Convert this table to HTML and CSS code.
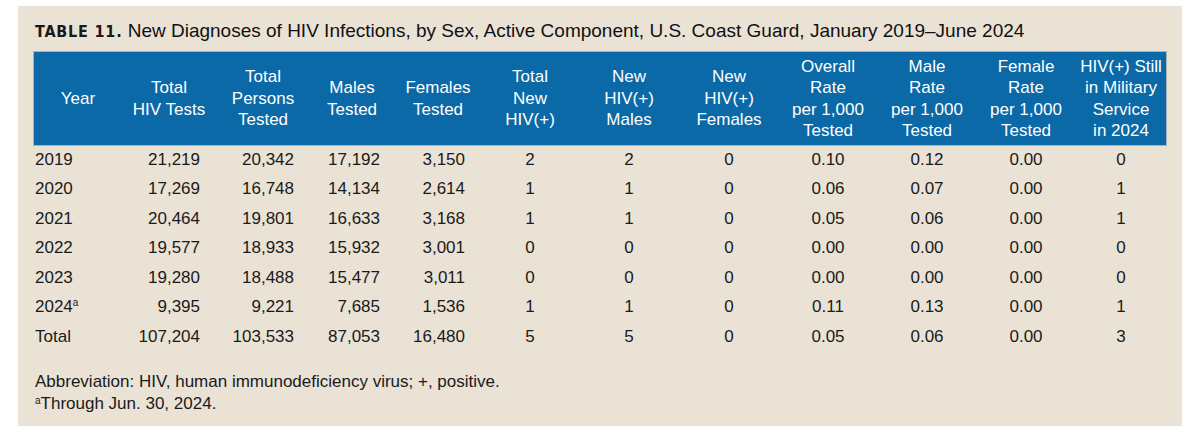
FILE: index.html
```html
<!DOCTYPE html>
<html>
<head>
<meta charset="utf-8">
<link rel="stylesheet" href="styles.css">
</head>
<body>
<div class="panel">
  <div class="title"><span class="label">TABLE 11.</span> New Diagnoses of HIV Infections, by Sex, Active Component, U.S. Coast Guard, January 2019–June 2024</div>
  <table class="data">
    <colgroup>
      <col class="c1"><col class="c2"><col class="c3"><col class="c4"><col class="c5"><col class="c6"><col class="c7"><col class="c8"><col class="c9"><col class="c10"><col class="c11"><col class="c12">
    </colgroup>
    <thead>
      <tr>
        <th>Year</th>
        <th>Total<br>HIV Tests</th>
        <th>Total<br>Persons<br>Tested</th>
        <th>Males<br>Tested</th>
        <th>Females<br>Tested</th>
        <th>Total<br>New<br>HIV(+)</th>
        <th>New<br>HIV(+)<br>Males</th>
        <th>New<br>HIV(+)<br>Females</th>
        <th>Overall<br>Rate<br>per 1,000<br>Tested</th>
        <th>Male<br>Rate<br>per 1,000<br>Tested</th>
        <th>Female<br>Rate<br>per 1,000<br>Tested</th>
        <th>HIV(+) Still<br>in Military<br>Service<br>in 2024</th>
      </tr>
    </thead>
    <tbody>
      <tr><td class="yr">2019</td><td class="n n2">21,219</td><td class="n n3">20,342</td><td class="n n4">17,192</td><td class="n n5">3,150</td><td>2</td><td>2</td><td>0</td><td>0.10</td><td>0.12</td><td>0.00</td><td>0</td></tr>
      <tr><td class="yr">2020</td><td class="n n2">17,269</td><td class="n n3">16,748</td><td class="n n4">14,134</td><td class="n n5">2,614</td><td>1</td><td>1</td><td>0</td><td>0.06</td><td>0.07</td><td>0.00</td><td>1</td></tr>
      <tr><td class="yr">2021</td><td class="n n2">20,464</td><td class="n n3">19,801</td><td class="n n4">16,633</td><td class="n n5">3,168</td><td>1</td><td>1</td><td>0</td><td>0.05</td><td>0.06</td><td>0.00</td><td>1</td></tr>
      <tr><td class="yr">2022</td><td class="n n2">19,577</td><td class="n n3">18,933</td><td class="n n4">15,932</td><td class="n n5">3,001</td><td>0</td><td>0</td><td>0</td><td>0.00</td><td>0.00</td><td>0.00</td><td>0</td></tr>
      <tr><td class="yr">2023</td><td class="n n2">19,280</td><td class="n n3">18,488</td><td class="n n4">15,477</td><td class="n n5">3,011</td><td>0</td><td>0</td><td>0</td><td>0.00</td><td>0.00</td><td>0.00</td><td>0</td></tr>
      <tr><td class="yr">2024<sup>a</sup></td><td class="n n2">9,395</td><td class="n n3">9,221</td><td class="n n4">7,685</td><td class="n n5">1,536</td><td>1</td><td>1</td><td>0</td><td>0.11</td><td>0.13</td><td>0.00</td><td>1</td></tr>
      <tr><td class="yr">Total</td><td class="n n2">107,204</td><td class="n n3">103,533</td><td class="n n4">87,053</td><td class="n n5">16,480</td><td>5</td><td>5</td><td>0</td><td>0.05</td><td>0.06</td><td>0.00</td><td>3</td></tr>
    </tbody>
  </table>
  <div class="notes">
    <p>Abbreviation: HIV, human immunodeficiency virus; +, positive.</p>
    <p><sup>a</sup>Through Jun. 30, 2024.</p>
  </div>
</div>
</body>
</html>
```

FILE: styles.css
```css
html, body {
  margin: 0;
  padding: 0;
  background: #ffffff;
}
body {
  padding: 6px 18px 7px 18px;
  font-family: "Liberation Sans", Arial, sans-serif;
  color: #1a1a1a;
}
.panel {
  background: #ebe2d6;
  width: 1164px;
  height: 420px;
  box-sizing: border-box;
  padding: 13px 16px 0 16px;
}
.title {
  font-size: 19px;
  line-height: 24px;
  color: #111;
  padding-left: 1px;
  white-space: nowrap;
}
.title .label {
  font-family: "DejaVu Sans Condensed", "DejaVu Sans", sans-serif;
  font-weight: bold;
  font-size: 16px;
  letter-spacing: 0.8px;
  color: #1a1a1a;
}
.data {
  margin-top: 8px;
  border-collapse: collapse;
  table-layout: fixed;
  width: 1132px;
  font-size: 17px;
}
.c1 { width: 88px; }
.c2 { width: 94px; }
.c3 { width: 94px; }
.c4 { width: 84px; }
.c5 { width: 88px; }
.c6 { width: 96px; }
.c7 { width: 102px; }
.c8 { width: 98px; }
.c9 { width: 100px; }
.c10 { width: 98px; }
.c11 { width: 100px; }
.c12 { width: 90px; }
thead tr {
  background: #0a69a6;
  outline: 1px solid #a8b4bd;
}
th {
  color: #ffffff;
  font-weight: normal;
  font-size: 17px;
  line-height: 21.5px;
  height: 93px;
  padding: 0;
  text-align: center;
  vertical-align: middle;
}
td {
  height: 29.5px;
  padding: 0;
  text-align: center;
  vertical-align: middle;
  line-height: 18px;
}
td.yr {
  text-align: left;
  padding-left: 1px;
}
td.n { text-align: right; }
td.n2 { padding-right: 16px; }
td.n3 { padding-right: 16px; }
td.n4 { padding-right: 14px; }
td.n5 { padding-right: 17px; }
sup {
  font-size: 10px;
  line-height: 0;
  vertical-align: 6px;
}
.notes {
  margin-top: 19px;
  font-size: 17px;
  line-height: 22px;
  padding-left: 1px;
}
.notes p { margin: 0; }
.notes sup { vertical-align: 5px; font-size: 10px; }
```
